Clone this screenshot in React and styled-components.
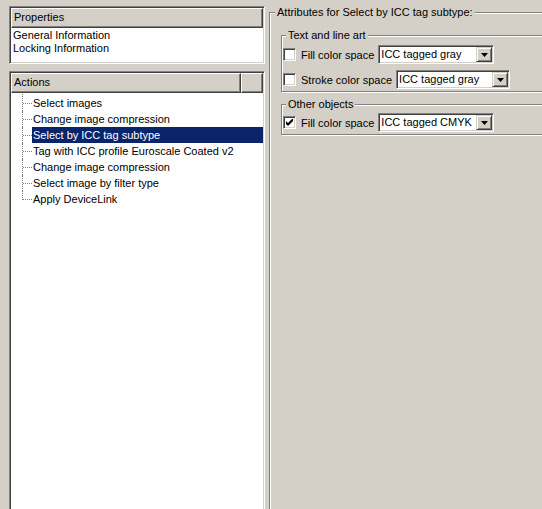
import React from 'react';
import styled, { createGlobalStyle } from 'styled-components';

const Global = createGlobalStyle`
  html, body { margin: 0; padding: 0; background: #d4d0c8; overflow: hidden; }
  body { font-family: "Liberation Sans", Arial, sans-serif; font-size: 11px; color: #000; }
  * { box-sizing: border-box; }
`;

const Page = styled.div`
  display: flex;
  width: 542px;
  height: 509px;
  overflow: hidden;
  background: #d4d0c8;
`;

const LeftPane = styled.div`
  flex: none;
  width: 265px;
  padding: 6px 0 0 9px;
  display: flex;
  flex-direction: column;
  gap: 7px;
`;

const SunkenBox = styled.div`
  width: 256px;
  height: ${(p) => p.$h}px;
  flex: none;
  border: 1px solid;
  border-color: #808080 #fff #fff #808080;
  box-shadow: inset 1px 1px 0 #404040, inset -1px -1px 0 #d4d0c8;
  padding: 1px;
  background: #fff;
  display: flex;
  flex-direction: column;
`;

const HeaderRow = styled.div`
  display: flex;
  height: 20px;
  flex: none;
`;

const HeaderCell = styled.div`
  width: ${(p) => (p.$w ? `${p.$w}px` : 'auto')};
  flex: ${(p) => (p.$w ? 'none' : '1')};
  background: #d4d0c8;
  border: 1px solid;
  border-color: #fff #404040 #404040 #fff;
  box-shadow: inset -1px -1px 0 #808080;
  padding-left: 2px;
  line-height: 17px;
  white-space: nowrap;
  overflow: hidden;
`;

const PlainList = styled.div`
  padding: 1px 0 0 2px;
  line-height: 13px;
`;

const Tree = styled.div`
  padding-top: 2px;
  display: flex;
  flex-direction: column;
`;

const TreeItem = styled.div`
  position: relative;
  height: 16px;
  padding-left: 21px;
  &::before {
    content: '';
    position: absolute;
    left: 11px;
    top: ${(p) => (p.$first ? '-1px' : '0')};
    height: ${(p) => (p.$last ? '9px' : 'auto')};
    bottom: ${(p) => (p.$last ? 'auto' : '0')};
    border-left: 1px dotted #808080;
  }
  &::after {
    content: '';
    position: absolute;
    left: 12px;
    top: 8px;
    width: 9px;
    border-top: 1px dotted #808080;
  }
`;

const TreeLabel = styled.span`
  display: block;
  height: 16px;
  line-height: 16px;
  padding-left: 1px;
  white-space: nowrap;
  background: ${(p) => (p.$selected ? '#0a246a' : 'transparent')};
  color: ${(p) => (p.$selected ? '#fff' : '#000')};
`;

const RightPane = styled.div`
  flex: 1;
  min-width: 0;
  padding: 12px 0 0 4px;
  overflow: hidden;
`;

const Group = styled.div`
  position: relative;
  border: 1px solid #808080;
  box-shadow: inset 1px 1px 0 #fff, 1px 1px 0 #fff;
  display: flex;
  flex-direction: column;
`;

const OuterGroup = styled(Group)`
  width: 300px;
  min-height: 520px;
  padding: 22px 11px 0 11px;
  gap: 12px;
`;

const InnerGroup = styled(Group)`
  padding: ${(p) => p.$pt}px 0 2px 1px;
  gap: 6px;
`;

const Legend = styled.span`
  position: absolute;
  top: -7px;
  left: ${(p) => p.$left}px;
  padding: 0 2px;
  line-height: 13px;
  background: #d4d0c8;
  white-space: nowrap;
`;

const Row = styled.div`
  display: flex;
  align-items: center;
  height: 19px;
`;

const CheckBox = styled.span`
  flex: none;
  width: 13px;
  height: 13px;
  border: 1px solid;
  border-color: #808080 #fff #fff #808080;
  box-shadow: inset 1px 1px 0 #404040, inset -1px -1px 0 #d4d0c8;
  background: #fff;
  display: flex;
  align-items: center;
  justify-content: center;
  margin-right: 5px;
`;

const FieldLabel = styled.span`
  white-space: nowrap;
  margin-right: 4px;
`;

const Combo = styled.div`
  flex: none;
  width: ${(p) => p.$w}px;
  height: 19px;
  border: 1px solid;
  border-color: #808080 #fff #fff #808080;
  box-shadow: inset 1px 1px 0 #404040, inset -1px -1px 0 #d4d0c8;
  padding: 1px;
  background: #fff;
  display: flex;
  align-items: center;
`;

const ComboText = styled.span`
  flex: 1;
  padding-left: 1px;
  white-space: nowrap;
  line-height: 15px;
`;

const DropButton = styled.span`
  flex: none;
  width: 16px;
  height: 15px;
  background: #d4d0c8;
  border: 1px solid;
  border-color: #d4d0c8 #404040 #404040 #d4d0c8;
  box-shadow: inset 1px 1px 0 #fff, inset -1px -1px 0 #808080;
  display: flex;
  align-items: center;
  justify-content: center;
`;

const Check = () => (
  <svg width="7" height="7" viewBox="0 0 7 7">
    <polygon points="0,2 2,4 7,-1 7,2 2,7 0,5" fill="#000" />
  </svg>
);

const Arrow = () => (
  <svg width="7" height="4" viewBox="0 0 7 4">
    <polygon points="0,0 7,0 3.5,4" fill="#000" />
  </svg>
);

const OptionRow = ({ checked, label, value, width }) => (
  <Row>
    <CheckBox>{checked && <Check />}</CheckBox>
    <FieldLabel>{label}</FieldLabel>
    <Combo $w={width}>
      <ComboText>{value}</ComboText>
      <DropButton>
        <Arrow />
      </DropButton>
    </Combo>
  </Row>
);

const actions = [
  'Select images',
  'Change image compression',
  'Select by ICC tag subtype',
  'Tag with ICC profile Euroscale Coated v2',
  'Change image compression',
  'Select image by filter type',
  'Apply DeviceLink',
];

export default function App() {
  return (
    <Page>
      <Global />
      <LeftPane>
        <SunkenBox $h={58}>
          <HeaderRow>
            <HeaderCell>Properties</HeaderCell>
          </HeaderRow>
          <PlainList>
            <div>General Information</div>
            <div>Locking Information</div>
          </PlainList>
        </SunkenBox>
        <SunkenBox $h={460}>
          <HeaderRow>
            <HeaderCell $w={230}>Actions</HeaderCell>
            <HeaderCell />
          </HeaderRow>
          <Tree>
            {actions.map((a, i) => (
              <TreeItem key={i} $first={i === 0} $last={i === actions.length - 1}>
                <TreeLabel $selected={i === 2}>{a}</TreeLabel>
              </TreeItem>
            ))}
          </Tree>
        </SunkenBox>
      </LeftPane>
      <RightPane>
        <OuterGroup>
          <Legend $left={5}>Attributes for Select by ICC tag subtype:</Legend>
          <InnerGroup $pt={9}>
            <Legend $left={4}>Text and line art</Legend>
            <OptionRow label="Fill color space" value="ICC tagged gray" width={116} />
            <OptionRow label="Stroke color space" value="ICC tagged gray" width={114} />
          </InnerGroup>
          <InnerGroup $pt={8}>
            <Legend $left={4}>Other objects</Legend>
            <OptionRow checked label="Fill color space" value="ICC tagged CMYK" width={116} />
          </InnerGroup>
        </OuterGroup>
      </RightPane>
    </Page>
  );
}
